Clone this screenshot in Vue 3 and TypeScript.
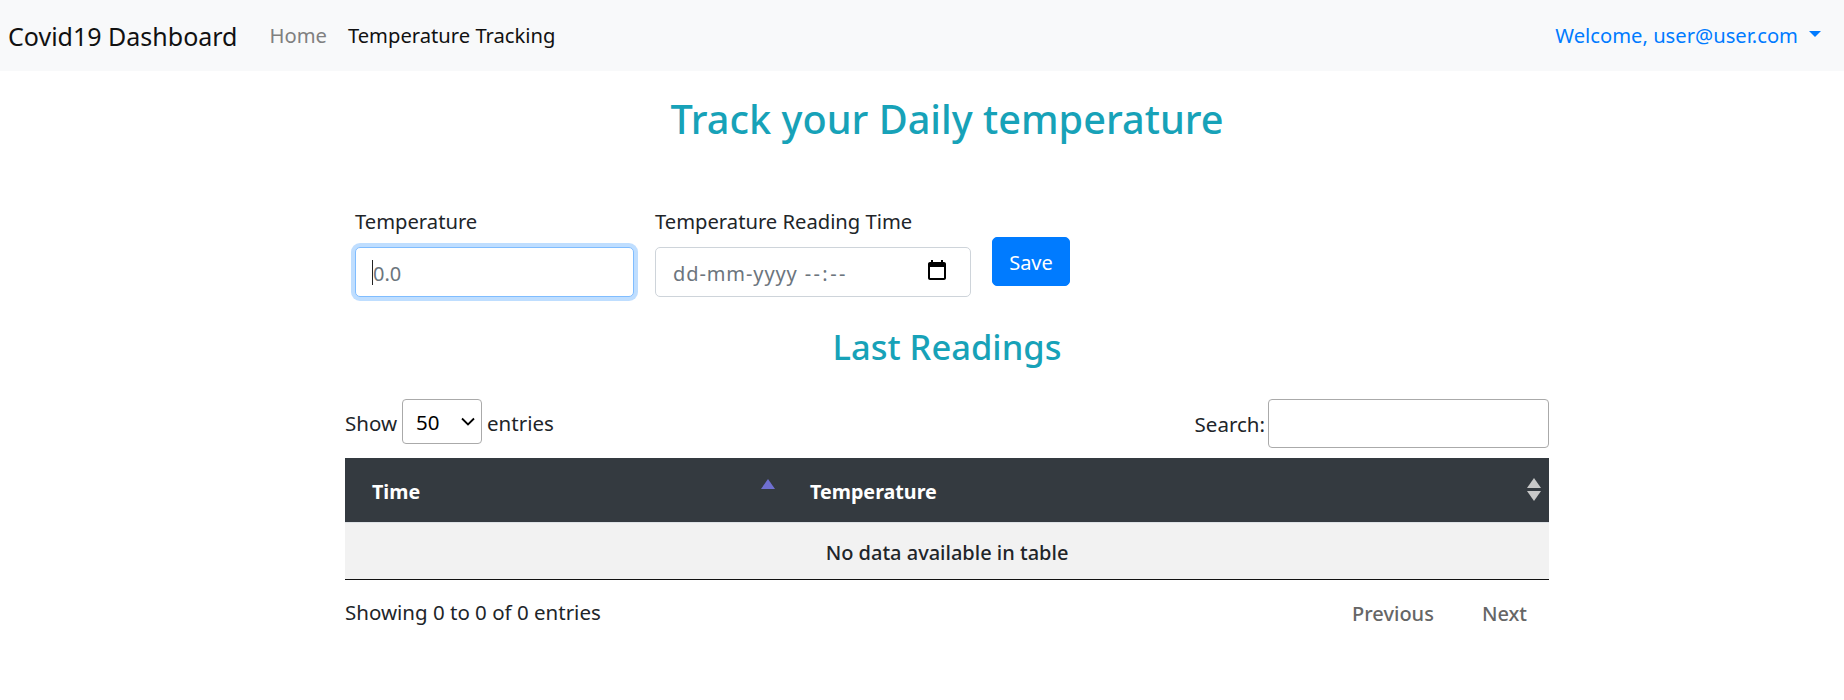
<script setup lang="ts">
import { ref } from 'vue';

const pageSize = ref('50');
const search = ref('');
const temperature = ref('');
</script>

<template>
  <nav class="navbar">
    <a class="brand">Covid19 Dashboard</a>
    <a class="nav-link muted">Home</a>
    <a class="nav-link active">Temperature Tracking</a>
    <a class="user">Welcome, user@user.com<span class="caret"></span></a>
  </nav>

  <main class="content">
    <h2 class="title">Track your Daily temperature</h2>

    <form class="reading-form" @submit.prevent>
      <div class="field field-temp">
        <label>Temperature</label>
        <div class="input-wrap">
          <input v-model="temperature" class="control focused" placeholder="0.0" />
          <span class="text-caret"></span>
        </div>
      </div>
      <div class="field field-time">
        <label>Temperature Reading Time</label>
        <div class="control date-control">
          <span class="date-text">dd-mm-yyyy<span class="date-time">--:--</span></span>
          <svg class="calendar" viewBox="0 0 24 24" width="24" height="24">
            <path fill="#000" d="M19 3h-1V1h-2v2H8V1H6v2H5c-1.1 0-2 .9-2 2v14c0 1.1.9 2 2 2h14c1.1 0 2-.9 2-2V5c0-1.1-.9-2-2-2zm0 16H5V8h14v11z" />
          </svg>
        </div>
      </div>
      <button class="save" type="submit">Save</button>
    </form>

    <h3 class="subtitle">Last Readings</h3>

    <div class="table-controls">
      <div class="length">
        <span>Show</span>
        <div class="select-wrap">
          <select v-model="pageSize">
            <option>10</option>
            <option>25</option>
            <option>50</option>
            <option>100</option>
          </select>
          <svg class="chevron" viewBox="0 0 14 9" width="14" height="9">
            <path d="M1 1.5l6 6 6-6" fill="none" stroke="#000" stroke-width="1.8" />
          </svg>
        </div>
        <span>entries</span>
      </div>
      <div class="search">
        <label>Search:</label>
        <input v-model="search" type="search" />
      </div>
    </div>

    <table class="readings">
      <thead>
        <tr>
          <th class="col-time">
            Time
            <span class="sort-up active-sort"></span>
          </th>
          <th>
            Temperature
            <span class="sort-both">
              <span class="sort-up"></span>
              <span class="sort-down"></span>
            </span>
          </th>
        </tr>
      </thead>
      <tbody>
        <tr>
          <td colspan="2">No data available in table</td>
        </tr>
      </tbody>
    </table>

    <div class="table-footer">
      <span>Showing 0 to 0 of 0 entries</span>
      <div class="pager">
        <a>Previous</a>
        <a>Next</a>
      </div>
    </div>
  </main>
</template>

<style>
body {
  background: #fff;
}
</style>

<style scoped>
.navbar,
.content {
  font-family: "Noto Sans", "Open Sans", sans-serif;
  color: #212529;
}

.navbar {
  display: flex;
  align-items: center;
  height: 71px;
  padding: 0 23px 0 8px;
  background: #f8f9fa;
  font-size: 20.2px;
  box-sizing: border-box;
}

.brand {
  font-size: 25px;
  margin-right: 32px;
  color: #111;
}

.nav-link {
  margin-right: 21px;
  margin-top: -2px;
}

.muted {
  color: #808080;
}

.active {
  color: #111;
}

.user {
  margin-left: auto;
  margin-top: -1px;
  color: #007bff;
  display: flex;
  align-items: center;
}

.caret {
  width: 0;
  height: 0;
  margin-left: 11px;
  margin-top: -3px;
  border-top: 6px solid #007bff;
  border-left: 6px solid transparent;
  border-right: 6px solid transparent;
}

.content {
  width: 1204px;
  margin-left: 345px;
  font-size: 20px;
}

.title {
  margin: 24px 0 0;
  font-size: 39.7px;
  line-height: 48px;
  font-weight: 500;
  text-align: center;
  color: #17a2b8;
}

.reading-form {
  display: flex;
  align-items: flex-start;
  margin-top: 63px;
  padding-left: 10px;
}

.field label {
  display: block;
  height: 30px;
  line-height: 31px;
  margin-bottom: 11px;
  font-size: 20.2px;
}

.field-temp {
  width: 279px;
  margin-right: 21px;
}

.field-time {
  width: 316px;
  margin-right: 21px;
}

.input-wrap {
  position: relative;
}

.control {
  display: block;
  width: 100%;
  height: 50px;
  box-sizing: border-box;
  border: 1px solid #ced4da;
  border-radius: 5px;
  padding: 2px 17px 0;
  font: inherit;
  color: #495057;
  background: #fff;
}

.control::placeholder {
  color: #6c757d;
}

.focused {
  border-color: #80bdff;
  outline: none;
  box-shadow: 0 0 0 4px rgba(0, 123, 255, 0.25);
}

.text-caret {
  position: absolute;
  left: 17px;
  top: 13px;
  width: 1px;
  height: 25px;
  background: #222;
}

.date-control {
  display: flex;
  align-items: center;
  justify-content: space-between;
  color: #6c757d;
  padding-right: 21px;
}

.date-text {
  letter-spacing: 0.9px;
}

.date-time {
  margin-left: 7px;
  letter-spacing: 2.4px;
}

.calendar {
  margin-top: -5px;
}

.save {
  width: 78px;
  height: 49px;
  margin-top: 31px;
  padding-top: 2px;
  border: 1px solid #007bff;
  border-radius: 5px;
  background: #007bff;
  color: #fff;
  font: inherit;
}

.subtitle {
  margin: 29px 0 0;
  font-size: 34.5px;
  line-height: 42px;
  font-weight: 500;
  text-align: center;
  color: #17a2b8;
}

.table-controls {
  display: flex;
  justify-content: space-between;
  align-items: flex-start;
  margin-top: 31px;
  font-size: 20.5px;
}

.length {
  display: flex;
  align-items: center;
  gap: 5px;
  height: 45px;
}

.length > span {
  padding-top: 2px;
}

.select-wrap {
  position: relative;
}

.select-wrap select {
  display: block;
  width: 80px;
  height: 45px;
  padding: 0 0 0 13px;
  border: 1px solid #aaa;
  border-radius: 4px;
  background: #fff;
  font: inherit;
  color: #000;
  appearance: none;
}

.chevron {
  position: absolute;
  right: 7px;
  top: 18px;
  pointer-events: none;
}

.search {
  display: flex;
  align-items: center;
  gap: 3px;
}

.search input {
  width: 281px;
  height: 49px;
  box-sizing: border-box;
  border: 1px solid #aaa;
  border-radius: 4px;
  background: #fff;
}

.readings {
  width: 100%;
  margin-top: 10px;
  border-collapse: collapse;
  table-layout: fixed;
  border-bottom: 1px solid #111;
}

.readings th {
  position: relative;
  height: 64px;
  padding: 3px 27px 0;
  background: #343a40;
  color: #fff;
  text-align: left;
  font-size: 19.7px;
  font-weight: 700;
  border-bottom: 1px solid #dee2e6;
  box-sizing: border-box;
}

.col-time {
  width: 438px;
}

.readings td {
  height: 57px;
  padding: 3px 0 0;
  box-sizing: border-box;
  background: #f2f2f2;
  text-align: center;
  font-weight: 500;
}

.sort-up,
.sort-down {
  display: block;
  width: 0;
  height: 0;
  border-left: 7px solid transparent;
  border-right: 7px solid transparent;
}

.sort-up {
  border-bottom: 10px solid #c8c8c8;
}

.sort-down {
  margin-top: 3px;
  border-top: 10px solid #c8c8c8;
}

.active-sort {
  position: absolute;
  right: 8px;
  top: 21px;
  border-bottom-color: #6f6fd0;
}

.sort-both {
  position: absolute;
  right: 8px;
  top: 20px;
}

.table-footer {
  display: flex;
  justify-content: space-between;
  align-items: center;
  height: 44px;
  margin-top: 10px;
  font-size: 20.5px;
}

.pager {
  display: flex;
  gap: 48px;
  padding: 4px 22px 0 0;
  color: #666;
  font-size: 20px;
  font-weight: 500;
}
</style>
